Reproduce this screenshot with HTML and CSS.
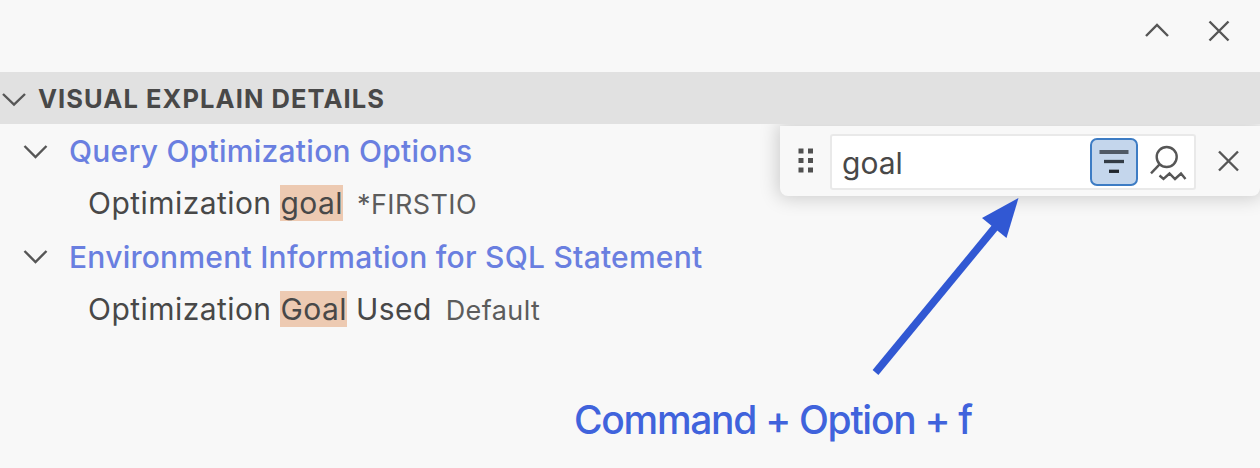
FILE: index.html
```html
<!DOCTYPE html>
<html lang="en">
<head>
<meta charset="utf-8">
<title>Visual Explain Details</title>
<link rel="stylesheet" href="styles.css">
</head>
<body>
<div class="panel">
  <div class="toolbar">
    <svg class="tool-icon" width="26" height="26" viewBox="0 0 26 26"><path d="M2 18 L13 7 L24 18"/></svg>
    <svg class="tool-icon" width="26" height="26" viewBox="0 0 26 26"><path d="M3.5 3.5 L22.5 22.5 M22.5 3.5 L3.5 22.5"/></svg>
  </div>
  <header class="section-header">
    <svg class="twistie" width="26" height="20" viewBox="0 0 26 20"><path d="M2 6 L13 16.5 L24 6"/></svg>
    <h2 class="section-title">VISUAL EXPLAIN DETAILS</h2>
  </header>
  <main class="content">
    <div class="tree">
      <div class="row group">
        <svg class="twistie" width="26" height="20" viewBox="0 0 26 20"><path d="M1.5 5 L12.5 16 L23.5 5"/></svg>
        <span class="group-label">Query Optimization Options</span>
      </div>
      <div class="row leaf">
        <span class="label">Optimization <mark class="match">goal</mark></span>
        <span class="value">*FIRSTIO</span>
      </div>
      <div class="row group">
        <svg class="twistie" width="26" height="20" viewBox="0 0 26 20"><path d="M1.5 4 L12.5 15 L23.5 4"/></svg>
        <span class="group-label">Environment Information for SQL Statement</span>
      </div>
      <div class="row leaf">
        <span class="label">Optimization <mark class="match">Goal</mark> Used</span>
        <span class="value">Default</span>
      </div>
    </div>
    <div class="find">
      <svg class="grip" width="16" height="26" viewBox="0 0 16 26"><path d="M.5 .5h5v5H.5zM10 .5h5v5H10zM.5 10h5v5H.5zM10 10h5v5H10zM.5 19.5h5v5H.5zM10 19.5h5v5H10z"/></svg>
      <div class="find-field">
        <span class="find-text">goal</span>
        <span class="toggle">
          <svg width="48" height="48" viewBox="0 0 48 48"><path class="bar-a" d="M9.5 14H38.5"/><path class="bar-b" d="M14 23.5H34"/><path class="bar-c" d="M19 33.3H29"/></svg>
        </span>
        <svg class="fuzzy" width="38" height="38" viewBox="0 0 38 38"><circle cx="16.7" cy="14" r="10"/><path d="M9.8 21.1 L1 30.3"/><path d="M9.5 32.5 L13.5 36 L19.5 30.5 L25 36 L31 30.5 L35.5 36"/></svg>
      </div>
      <svg class="close" width="26" height="26" viewBox="0 0 26 26"><path d="M3 3.5 L22 22.5 M22 3.5 L3 22.5"/></svg>
    </div>
  </main>
  <footer class="hint"><span class="hint-text">Command + Option + f</span></footer>
  <svg class="arrow" width="1260" height="468" viewBox="0 0 1260 468"><path class="shaft" d="M875.5 372.5 L997 225"/><path class="head" d="M1018.5 198 L982 218 L1006.5 238 Z"/></svg>
</div>
</body>
</html>
```

FILE: styles.css
```css
* { box-sizing: border-box; }
body {
  margin: 0;
  background: #f8f8f8;
  color: #484848;
  font-family: Inter, "Liberation Sans", sans-serif;
}
svg { display: block; flex: none; fill: none; stroke: #565656; stroke-width: 2.4; }
.panel { position: relative; width: 1260px; height: 468px; overflow: hidden; }
.toolbar {
  height: 72px;
  display: flex;
  justify-content: flex-end;
  gap: 36px;
  padding: 18px 28px 0 0;
}
.section-header {
  height: 52px;
  display: flex;
  align-items: center;
  gap: 11px;
  padding-left: 1px;
  background: #e1e1e1;
}
.section-title {
  margin: 0;
  padding-top: 2px;
  font-size: 25.5px;
  line-height: 50px;
  font-weight: 700;
  letter-spacing: 1.07px;
  white-space: nowrap;
}
.content { height: 229px; display: flex; justify-content: space-between; overflow: hidden; }
.tree { flex: none; }
.row { height: 53px; display: flex; align-items: center; white-space: nowrap; }
.group { padding-left: 23px; gap: 20px; }
.group-label { font-size: 30px; font-weight: 450; letter-spacing: 0.25px; color: #6a7fe0; }
.leaf { padding-left: 88px; align-items: baseline; line-height: 52px; }
.label { font-size: 30px; font-weight: 420; letter-spacing: 0.45px; }
.match { background: #edcab2; color: inherit; line-height: 36px; }
.value { font-size: 27px; letter-spacing: 0.4px; color: #5c5c5c; margin-left: 14px; }
.find {
  width: 480px;
  height: 70px;
  margin-top: 2px;
  display: flex;
  align-items: center;
  padding: 0 18px;
  background: #f8f8f8;
  border-radius: 0 0 8px 8px;
  box-shadow: 0 0 18px 3px rgba(0, 0, 0, 0.17);
}
.grip { fill: #505050; stroke: none; }
.find-field {
  width: 366px;
  height: 56px;
  margin: 2px 0 0 16px;
  display: flex;
  align-items: center;
  background: #fff;
  border: 2px solid #e9e9e9;
  border-radius: 3px;
}
.find-text { width: 258px; padding: 2px 0 0 10px; font-size: 30px; font-weight: 420; line-height: 50px; }
.toggle {
  width: 48px;
  height: 48px;
  flex: none;
  background: #c4d6ec;
  border: 2px solid #3d7cc4;
  border-radius: 7px;
}
.toggle svg { margin: -2px; }
.bar-a { stroke: #505a66; stroke-width: 4; }
.bar-b { stroke: #333c46; stroke-width: 3.3; }
.bar-c { stroke: #20262d; stroke-width: 3.3; }
.fuzzy { margin-left: 12px; }
.close { margin-left: 20px; }
.hint { padding-left: 574px; height: 115px; }
.hint-text { display: block; padding-top: 42px; font-size: 39px; font-weight: 450; line-height: 50px; color: #4063dc; white-space: nowrap; letter-spacing: -1.3px; }
.arrow { position: absolute; left: 0; top: 0; pointer-events: none; }
.shaft { stroke: #3158d3; stroke-width: 7.5; }
.head { fill: #3158d3; stroke: none; }
```
